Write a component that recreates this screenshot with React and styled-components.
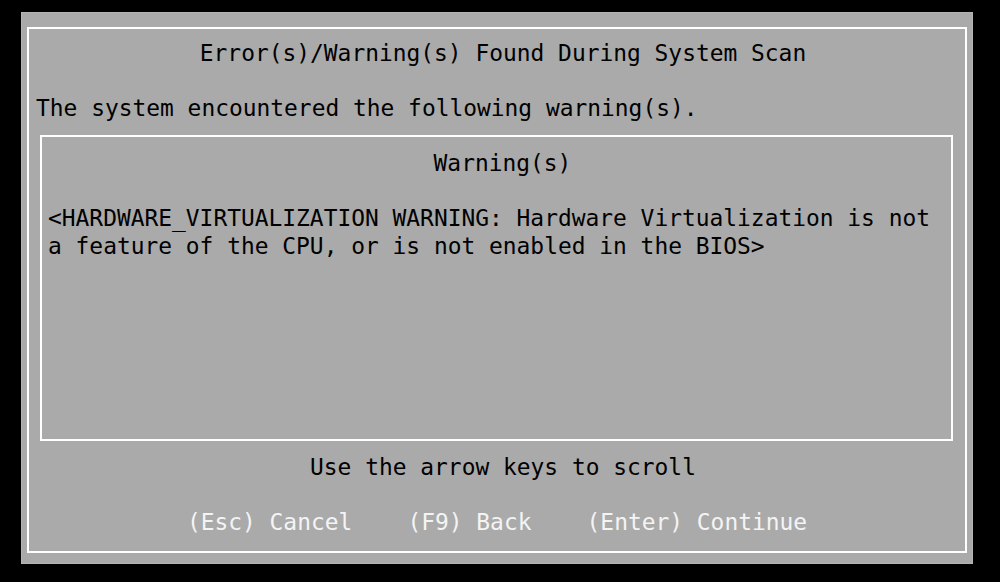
import styled, { createGlobalStyle } from 'styled-components'

const GlobalStyle = createGlobalStyle`
    html, body {
        margin:0;
        padding:0;
        background:#000;
    }
`

const ROW = '27.6px'

const Screen = styled.div`
    width:1000px;
    height:582px;
    box-sizing:border-box;
    padding:12px 27px 18px 21px;
    background:#000;
    font-family: "DejaVu Sans Mono", "Liberation Mono", monospace;
    font-size:22.9px;
    line-height:${ROW};
    color:#000;
`

const Panel = styled.div`
    width:952px;
    height:552px;
    box-sizing:border-box;
    padding:15px 6px 11px 6px;
    background:#aaaaaa;
    box-shadow: inset 0 0 0 1px #b4b4b4;
`

const Frame = styled.div`
    height:100%;
    box-sizing:border-box;
    border:2px solid #fff;
    padding-top:11px;
    display:flex;
    flex-direction:column;
`

const Centered = styled.div`
    text-align:center;
    white-space:pre;
    padding-left:${props => props.$shift || 0}px;
    margin-top:${props => props.$top || '0px'};
`

const Line = styled.div`
    white-space:pre;
    padding-left:${props => props.$indent || 0}px;
    margin-top:${props => props.$top || '0px'};
`

const WarningBox = styled.div`
    margin:12px 12px 0 11px;
    height:306px;
    box-sizing:border-box;
    border:2px solid #fff;
    padding-top:13px;
    display:flex;
    flex-direction:column;
`

const Actions = styled.div`
    margin-top:${ROW};
    display:flex;
    justify-content:center;
    gap:4ch;
    color:#f4f4f4;
    white-space:pre;
`

const App = () => {
    return (
        <Screen>
            <GlobalStyle />
            <Panel>
                <Frame>
                    <Centered $shift={12}>Error(s)/Warning(s) Found During System Scan</Centered>

                    <Line $indent={7} $top={ROW}>The system encountered the following warning(s).</Line>

                    <WarningBox>
                        <Centered $shift={12}>Warning(s)</Centered>
                        <Line $indent={6} $top={ROW}>&lt;HARDWARE_VIRTUALIZATION WARNING: Hardware Virtualization is not</Line>
                        <Line $indent={6}>a feature of the CPU, or is not enabled in the BIOS&gt;</Line>
                    </WarningBox>

                    <Centered $shift={12} $top="13px">Use the arrow keys to scroll</Centered>

                    <Actions>
                        <span>(Esc) Cancel</span>
                        <span>(F9) Back</span>
                        <span>(Enter) Continue</span>
                    </Actions>
                </Frame>
            </Panel>
        </Screen>
    )
}

export default App
